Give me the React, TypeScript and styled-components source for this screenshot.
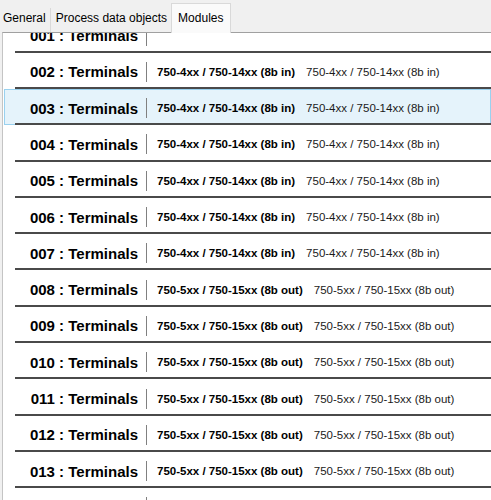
import React from "react"
import styled, { createGlobalStyle } from "styled-components"

const GlobalStyle = createGlobalStyle`
  html, body {
    margin: 0;
    padding: 0;
    background: #f0f0f0;
    font-family: "Liberation Sans", Arial, sans-serif;
    overflow: hidden;
  }
`

type Module = { id: string; type?: string }

const IN = "750-4xx / 750-14xx (8b in)"
const OUT = "750-5xx / 750-15xx (8b out)"

const modules: Module[] = [
  { id: "001" },
  { id: "002", type: IN },
  { id: "003", type: IN },
  { id: "004", type: IN },
  { id: "005", type: IN },
  { id: "006", type: IN },
  { id: "007", type: IN },
  { id: "008", type: OUT },
  { id: "009", type: OUT },
  { id: "010", type: OUT },
  { id: "011", type: OUT },
  { id: "012", type: OUT },
  { id: "013", type: OUT },
  { id: "014" },
]

export default function App() {
  return (
    <Window>
      <GlobalStyle />
      <TabBar>
        <Tab $first>General</Tab>
        <Tab>Process data objects</Tab>
        <Tab $active>Modules</Tab>
      </TabBar>
      <Panel>
        <List>
          {modules.map((m) => (
            <Row key={m.id} $selected={m.id === "003"}>
              <Name>{m.id} : Terminals</Name>
              <Divider />
              {m.type && <TypeBold>{m.type}</TypeBold>}
              {m.type && <TypeText>{m.type}</TypeText>}
            </Row>
          ))}
        </List>
      </Panel>
    </Window>
  )
}

const Window = styled.div`
  width: 491px;
  height: 500px;
  display: flex;
  flex-direction: column;
  overflow: hidden;
`

const TabBar = styled.div`
  display: flex;
  align-items: flex-end;
  height: 32px;
  position: relative;
  z-index: 1;
`

const Tab = styled.div<{ $active?: boolean; $first?: boolean }>`
  box-sizing: border-box;
  height: ${(p) => (p.$active ? "30px" : "24px")};
  padding: ${(p) => (p.$active ? "4px 7px 0 6px" : p.$first ? "0 4px 0 3px" : "0 4px 0 5px")};
  margin-left: ${(p) => (p.$active ? "-1px" : "0")};
  margin-bottom: ${(p) => (p.$active ? "-1px" : "0")};
  line-height: 20px;
  font-size: 12px;
  color: #000;
  white-space: nowrap;
  background: ${(p) => (p.$active ? "#fafafa" : "#f0f0f0")};
  border-right: 1px solid #d9d9d9;
  border-left: ${(p) => (p.$active ? "1px solid #d9d9d9" : "none")};
  border-top: ${(p) => (p.$active ? "1px solid #d9d9d9" : "none")};
`

const Panel = styled.div`
  flex: 1;
  margin-left: 2px;
  background: #fff;
  border-top: 1px solid #a0a0a0;
  border-left: 1px solid #c4c4c4;
  overflow: hidden;
`

const List = styled.div`
  isolation: isolate;
  background: #fff;
  margin-top: -16.6px;
`

const Row = styled.div<{ $selected?: boolean }>`
  position: relative;
  box-sizing: border-box;
  height: 36.3px;
  margin-left: 12px;
  padding-top: 4px;
  display: flex;
  align-items: center;
  border-bottom: 2px solid #4a4a4a;

  &::before {
    content: "";
    display: ${(p) => (p.$selected ? "block" : "none")};
    position: absolute;
    z-index: -1;
    top: 0;
    bottom: -2px;
    left: -11px;
    right: 0;
    background: #e5f3fb;
    border: 1px solid #99d1ef;
  }
`

const Name = styled.div`
  box-sizing: border-box;
  width: 131px;
  padding-right: 8px;
  text-align: right;
  font-size: 15px;
  font-weight: bold;
  color: #000;
  white-space: nowrap;
`

const Divider = styled.div`
  width: 1px;
  height: 20px;
  background: #808080;
  margin-right: 10px;
`

const TypeBold = styled.div`
  font-size: 11.5px;
  font-weight: bold;
  color: #000;
  white-space: nowrap;
  margin-right: 11px;
`

const TypeText = styled.div`
  font-size: 11.5px;
  color: #1a1a1a;
  white-space: nowrap;
`
